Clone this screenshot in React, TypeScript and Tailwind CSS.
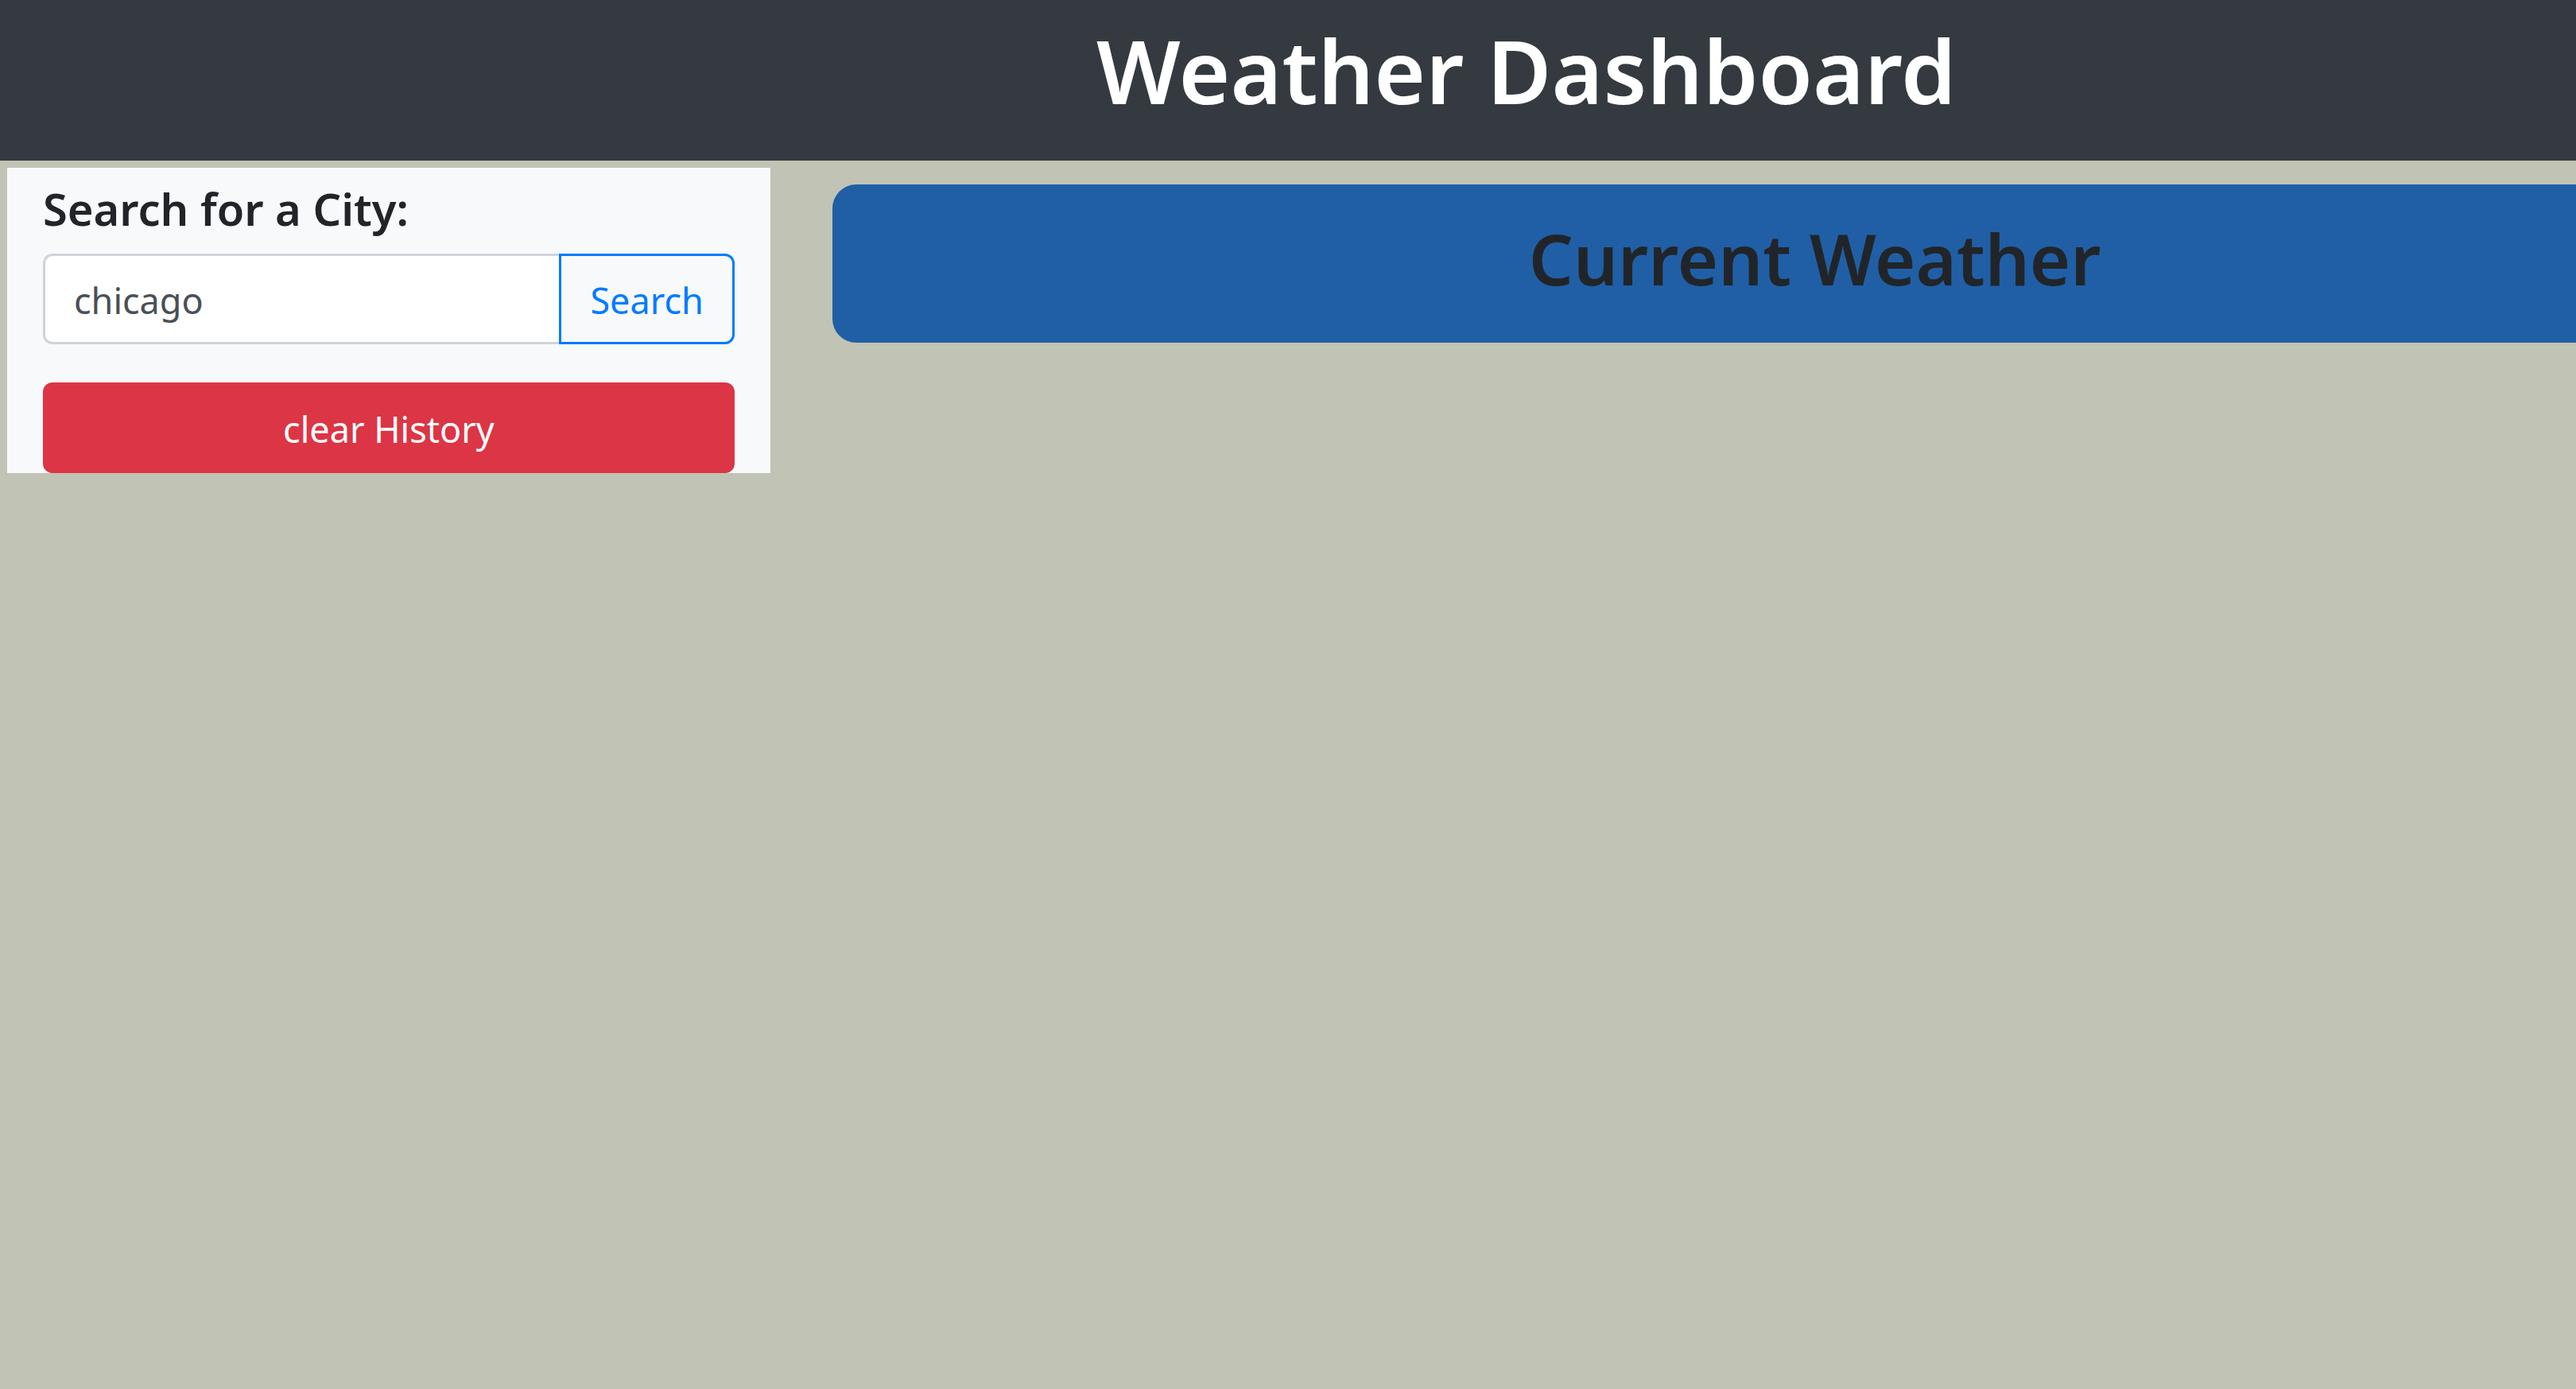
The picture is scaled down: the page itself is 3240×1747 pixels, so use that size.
import { useState } from 'react';

export default function App() {
  const [city, setCity] = useState('chicago');

  return (
    <div className="min-h-screen overflow-hidden bg-[#c1c3b4] font-['Noto_Sans',sans-serif] text-[#212529]">
      <div className="w-[118.5%]">
        <header className="bg-[#343a40] pt-4 pb-[42px] text-center text-white">
          <h1 className="text-[111px] leading-[144px] font-semibold">Weather Dashboard</h1>
        </header>

        <main className="flex items-start pt-[9px]">
          <aside className="ml-[9px] w-1/4 bg-[#f8f9fa] px-[45px] pt-[15px]">
            <form onSubmit={(e) => e.preventDefault()}>
              <h2 className="mb-[21px] text-[56px] leading-[72px] font-semibold">
                <label htmlFor="city">Search for a City:</label>
              </h2>
              <div className="flex h-[114px] text-[45px] leading-[72px]">
                <input
                  id="city"
                  type="text"
                  value={city}
                  onChange={(e) => setCity(e.target.value)}
                  className="min-w-0 flex-1 rounded-l-[12px] border-[3px] border-r-0 border-[#ced4da] bg-white px-9 pt-1 text-[#495057] outline-none"
                />
                <button
                  type="submit"
                  className="rounded-r-[12px] border-[3px] border-[#007bff] px-9 pt-1 text-[#007bff]"
                >
                  Search
                </button>
              </div>
            </form>
            <button
              type="button"
              onClick={() => setCity('')}
              className="mt-12 block h-[114px] w-full rounded-[12px] bg-[#dc3545] pt-1 text-[45px] leading-[72px] text-white"
            >
              clear History
            </button>
          </aside>

          <section className="mt-[21px] mr-[321px] ml-[78px] flex-1 rounded-[30px] bg-[#205fa6] pt-9 pb-12 text-center">
            <h2 className="text-[88px] leading-[115px] font-semibold">Current Weather</h2>
          </section>
        </main>
      </div>
    </div>
  );
}
